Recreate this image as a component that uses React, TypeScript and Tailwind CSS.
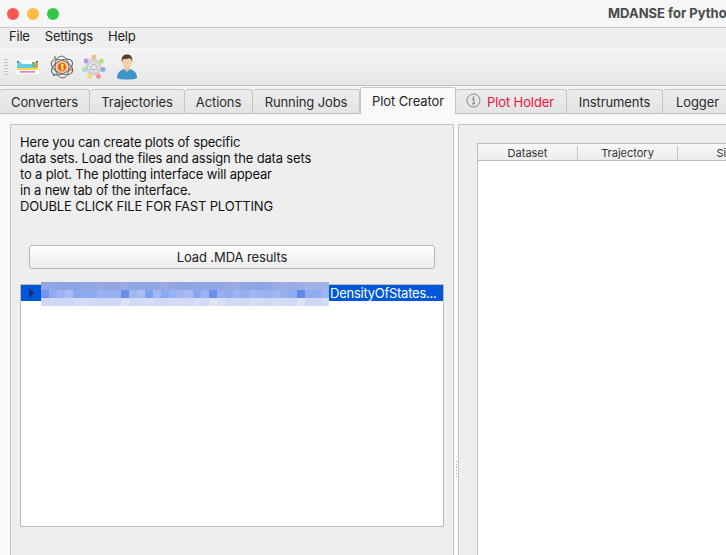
const tabs = [
  { label: "Converters", width: "w-[90px]" },
  { label: "Trajectories", width: "w-[95px]" },
  { label: "Actions", width: "w-[68px]" },
  { label: "Running Jobs", width: "w-[107px]" },
]

const tabsAfter = [
  { label: "Instruments", width: "w-[96px]" },
  { label: "Logger", width: "w-[70px]" },
]

const lines = [
  "Here you can create plots of specific",
  "data sets. Load the files and assign the data sets",
  "to a plot. The plotting interface will appear",
  "in a new tab of the interface.",
  "DOUBLE CLICK FILE FOR FAST PLOTTING",
]

const columns = ["Dataset", "Trajectory", "Size"]

// pixelated block over the file path
const mosaic = [
  "94a6e2 94a6e2 8fa2e1 8fa2e1 8fa2e1 94a6e2 94a6e2 99aae3 94a6e2 94a6e2 99aae4 94a6e2 94a6e2 94a6e2 94a6e2 99aae4 94a6e2 8fa2e1 8fa2e1 94a6e2 94a6e2 94a6e2 94a6e2 99aae3 99aae3 94a6e2 94a6e2 8fa2e1 94a6e2 99aae4 9db0e5 99aae3 9db0e5 a2b3e6 9db0e5 a2b3e6",
  "6f94ee 93aaf0 9db2f0 a9bdf3 8aa7ef 8fabf0 8fabf0 9bb3f2 98b0f1 9ab0f0 6690ec 9fb6f2 a9bef3 7d9fef a2b7f2 8aa7ef 98b1f1 9fb6f2 a9bdf3 89a6f0 9db3f1 6690ec 97aff0 8fabf0 9db3f2 97aff0 a2b7f2 9db3f1 98b1f1 a2b7f2 97aff0 8fabf0 5f88e8 93aaf0 8fabf0 9db3f2",
  "d0d8f5 d0d8f5 cdd6f5 cdd6f5 d3dbf6 d6def7 d0d8f5 d0d8f5 d0d8f5 d0d8f5 dbe1f7 d0d8f5 d3dbf6 d3dbf6 d0d8f5 d0d8f5 d3dbf6 d3dbf6 d0d8f5 d6def7 d0d8f5 dfe4f8 d9dff7 d0d8f5 d3dbf6 d0d8f5 d6def7 d3dbf6 d0d8f5 d6def7 d3dbf6 d0d8f5 dbe1f7 cdd6f5 cdd6f5 d3dbf6",
].map((row) => row.split(" "))

function PeriodicIcon() {
  return (
    <svg width="26" height="20" viewBox="0 0 26 20">
      <rect x="2" y="3" width="23" height="14" fill="#fff" />
      <rect x="3" y="4" width="2" height="1" fill="#444" />
      <rect x="22" y="4" width="2" height="1" fill="#444" />
      <rect x="3" y="5" width="21" height="6" fill="#62cfe8" />
      <rect x="7" y="5" width="11" height="2" fill="#fff" />
      <rect x="18" y="5" width="3" height="5" fill="#6cc08a" />
      <rect x="21" y="5" width="3" height="6" fill="#d8a24a" />
      <rect x="3" y="11" width="21" height="2" fill="#ffd84a" />
      <rect x="6" y="14" width="15" height="1" fill="#e57cc4" />
      <rect x="6" y="15" width="15" height="1" fill="#eea0d4" />
    </svg>
  )
}

function AtomIcon() {
  return (
    <svg width="26" height="26" viewBox="0 0 26 26">
      <circle cx="13" cy="13" r="7" fill="#f9d2a4" />
      <g fill="none" stroke="#5c5c5c" strokeWidth="0.9">
        <ellipse cx="13" cy="13" rx="11.5" ry="6.5" transform="rotate(25 13 13)" />
        <ellipse cx="13" cy="13" rx="11.5" ry="6.5" transform="rotate(-30 13 13)" />
        <ellipse cx="13" cy="13" rx="11" ry="7" transform="rotate(85 13 13)" />
      </g>
      <circle cx="13" cy="13" r="4.500" fill="#f0752f" />
      <circle cx="13" cy="13" r="3" fill="#ec4f30" />
      <rect x="12" y="10" width="2.500" height="6" fill="#ffe25a" />
      <circle cx="6" cy="3.500" r="1.200" fill="#45b35a" />
      <circle cx="22" cy="16" r="1.200" fill="#e89a3a" />
      <circle cx="5" cy="21" r="1.200" fill="#3a8fc0" />
    </svg>
  )
}

function NetworkIcon() {
  const nodes = [
    { x: 13, y: 4, c: "#f5bd85" },
    { x: 20.5, y: 8, c: "#b4e07e" },
    { x: 22, y: 16.5, c: "#8aa8f2" },
    { x: 17.5, y: 23.5, c: "#f28f9a" },
    { x: 8.5, y: 23.5, c: "#f4d970" },
    { x: 3.5, y: 16.5, c: "#a0e2c2" },
    { x: 5, y: 8, c: "#b49aea" },
  ]
  return (
    <svg width="28" height="28" viewBox="0 0 28 28">
      <g stroke="#a8a8a8" strokeWidth="0.5">
        {nodes.map((a, i) =>
          nodes.slice(i + 2).map((b) => (
            <line key={`${a.x}-${b.x}`} x1={a.x} y1={a.y} x2={b.x} y2={b.y} />
          ))
        )}
      </g>
      {nodes.map((n) => (
        <circle key={n.x} cx={n.x} cy={n.y} r="2.400" fill={n.c} />
      ))}
    </svg>
  )
}

function PersonIcon() {
  return (
    <svg width="24" height="28" viewBox="0 0 24 28">
      <path d="M2 25c0-6 4-8 7-9h6c3 1 7 3 7 9-3 2-17 2-20 0z" fill="#3f94c8" />
      <path d="M9 16l3 3 3-3v-3H9z" fill="#f0c8a8" />
      <ellipse cx="12" cy="9" rx="5" ry="6" fill="#f3cfb0" />
      <path d="M6.800 9C6 3 9 1.500 12 1.500S18 3 17.200 9c-.5-2.500-1.500-3.500-2.500-3.800-2 .8-5 .8-6 .5C7.800 6.500 7.200 7.500 6.800 9z" fill="#5a3d2c" />
    </svg>
  )
}

function Tab({ label, width }: { label: string; width: string }) {
  return (
    <div className={`${width} mt-[2px] h-[24px] pt-[2px] shrink-0 flex items-center justify-center border-r border-t border-[#c4c4c4] rounded-t-[3px] bg-gradient-to-b from-[#ececec] to-[#e4e4e4] text-[#2c2c2c]`}>
      {label}
    </div>
  )
}

export default function App() {
  return (
    <div className="w-[726px] h-[555px] overflow-hidden bg-[#f9f9f9] text-[13px] text-[#1e1e1e] font-['Inter','Liberation_Sans',sans-serif] flex flex-col">
      {/* title bar */}
      <div className="h-[28px] shrink-0 bg-[#f6f6f6] border-b border-[#c9c9c9] flex items-center pl-[7px] gap-2 whitespace-nowrap">
        <span className="w-3 h-3 shrink-0 rounded-full bg-[#fc5753]" />
        <span className="w-3 h-3 shrink-0 rounded-full bg-[#fdbc40]" />
        <span className="w-3 h-3 shrink-0 rounded-full bg-[#33c748]" />
        <span className="ml-[541px] shrink-0 font-bold text-[#4a4a4a]">MDANSE for Python</span>
      </div>

      {/* menu */}
      <div className="h-[20px] pb-[2px] shrink-0 bg-[#eeeeee] flex items-center pl-[9px] gap-[15px] text-[#222] tracking-[-0.2px]">
        <span>File</span>
        <span>Settings</span>
        <span>Help</span>
      </div>

      {/* toolbar */}
      <div className="h-[38px] shrink-0 border-y border-t-[#f6f6f6] border-b-[#bdbdbd] bg-gradient-to-b from-[#f4f4f4] to-[#e6e6e6] flex items-center pl-[4px]">
        <div className="w-[4px] h-[18px] mr-[6px] bg-[radial-gradient(#c4c4c4_40%,transparent_45%)] bg-[length:2px_3px]" />
        <div className="flex items-center gap-[6px]">
          <PeriodicIcon />
          <div className="ml-[3px]"><AtomIcon /></div>
          <NetworkIcon />
          <PersonIcon />
        </div>
      </div>

      {/* tabs */}
      <div className="h-[27px] shrink-0 flex items-start bg-[#f4f4f4] border-b border-[#c0c0c0] whitespace-nowrap mt-[1px] relative tracking-[-0.1px]">
        {tabs.map((t) => (
          <Tab key={t.label} {...t} />
        ))}
        <div className="w-[96px] h-[27px] pt-[2px] shrink-0 flex items-center justify-center bg-[#f9f9f9] border-x border-t border-[#c4c4c4] rounded-t-[3px] relative z-10">
          Plot Creator
        </div>
        <div className="w-[111px] mt-[2px] h-[24px] pt-[2px] pr-[2px] shrink-0 flex items-center justify-center gap-[6px] border-r border-t border-[#c4c4c4] rounded-t-[3px] bg-gradient-to-b from-[#ececec] to-[#e4e4e4] text-[#f0103c]">
          <svg width="15" height="15" viewBox="0 0 15 15" className="-mt-[4px]">
            <circle cx="7.500" cy="7.500" r="6.500" fill="none" stroke="#8a8a8a" />
            <circle cx="7.500" cy="4.500" r="0.900" fill="#777" />
            <path d="M6.300 6.500h1.700v4M6 10.800h3" fill="none" stroke="#777" />
          </svg>
          <span>Plot Holder</span>
        </div>
        {tabsAfter.map((t) => (
          <Tab key={t.label} {...t} />
        ))}
      </div>

      {/* body */}
      <div className="flex-1 min-h-0 flex pl-[10px] pt-[10px]">
        <div className="w-[444px] shrink-0 border border-b-0 border-[#c4c4c4] bg-[#eeeeee] pl-[9px] pr-[9px] flex flex-col">
          <div className="pt-[9px] leading-[16px] text-[#111] tracking-[-0.16px]">
            {lines.map((l) => (
              <div key={l} className="whitespace-nowrap">{l}</div>
            ))}
          </div>
          <button className="mt-[31px] ml-[9px] mr-[9px] h-[24px] pt-[2px] shrink-0 rounded-[3px] border border-[#b8b8b8] bg-gradient-to-b from-[#fdfdfd] to-[#ededed] text-[#222] tracking-[-0.1px]">
            Load .MDA results
          </button>
          <div className="mt-[15px] h-[243px] shrink-0 border border-[#bcbcbc] bg-white relative">
            <div className="h-[16px] pt-[1px] bg-[#0058d9] flex items-center whitespace-nowrap text-white pl-[8px] pr-[7px]">
              <svg width="5" height="10" viewBox="0 0 5 10" className="shrink-0 -mt-[1px]">
                <path d="M0 0l5 5-5 5z" fill="#12306e" />
              </svg>
              <span className="ml-[296px] tracking-[-0.25px]">DensityOfStates...</span>
            </div>
            {/* redacted path */}
            <div className="absolute left-[20px] top-[-3px] flex flex-col">
              {mosaic.map((row, r) => (
                <div key={r} className="flex h-[8px]">
                  {row.map((c, i) => (
                    <div key={i} className="w-[8px] h-[8px]" style={{ backgroundColor: `#${c}` }} />
                  ))}
                </div>
              ))}
            </div>
          </div>
        </div>

        {/* splitter */}
        <div className="w-[4px] shrink-0 flex flex-col items-center gap-[2px] pt-[337px]">
          {[0, 1, 2, 3, 4, 5].map((d) => (
            <span key={d} className="w-[1px] h-[1px] bg-[#a8a8a8]" />
          ))}
        </div>

        <div className="flex-1 min-w-0 border-l border-t border-[#c4c4c4] bg-[#eeeeee] pl-[18px] pt-[18px] flex">
          <div className="flex-1 border-l border-t border-[#c0c0c0] bg-white flex flex-col">
            <div className="h-[17px] pt-[2px] shrink-0 flex border-b border-[#c0c0c0] bg-gradient-to-b from-[#f8f8f8] to-[#ececec] text-[11px] text-[#333]">
              {columns.map((c) => (
                <div key={c} className="w-[100px] shrink-0 border-r border-[#c8c8c8] flex items-center justify-center">
                  {c}
                </div>
              ))}
            </div>
          </div>
        </div>
      </div>
    </div>
  )
}
